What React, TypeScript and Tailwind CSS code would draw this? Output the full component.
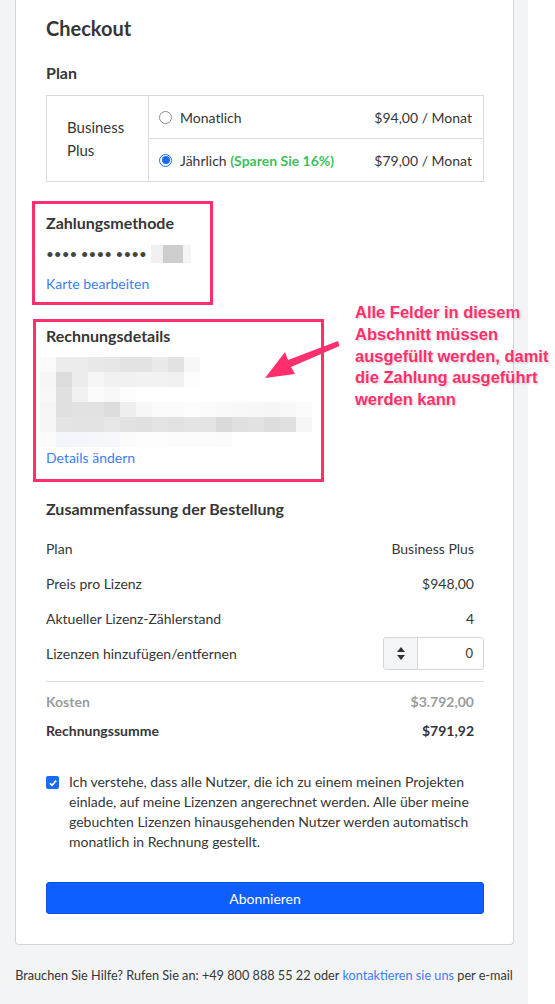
import React from "react";

const mosaic: string[][] = [
  ["#fafafa", "#ececec", "#ececec", "#e8e8e8", "#e6e6e6", "#e3e3e3", "#e3e3e3", "#e9e9e9", "#e2e2e2", "#f7f7f7"],
  ["#f6f6f6", "#dcdcdc", "#ececec", "#f6f6f6", "#f0f0f0", "#f0f0f0", "#f2f2f2", "#f2f2f2", "#f0f0f0", "#fdfdfd"],
  ["#f8f8f8", "#e0e0e0", "#f1f1f1", "#fafafa", "#f8f8f8", "#fdfdfd"],
  ["#f6f6f6", "#e0e0e0", "#e2e2e2", "#e2e2e2", "#dcdcdc", "#eeeeee", "#f7f7f7", "#fbfbfb", "#fafafa", "#fdfdfd", "#fbfbfb", "#f9f9f9", "#f8f8f8", "#f7f7f7", "#f6f6f6", "#f8f8f8", "#fbfbfb"],
  ["#f6f6f6", "#e4e4e4", "#e3e3e3", "#e3e3e3", "#e6e6e6", "#e2e2e2", "#e0e0e0", "#e4e4e4", "#e2e2e2", "#e4e4e4", "#e4e4e4", "#dadada", "#e0e0e0", "#e2e2e2", "#dddddd", "#e0e0e0", "#f6f6f6"],
  ["#fbfbfb", "#f2f5fb", "#f4f6fb", "#f6f7fb", "#f7f8fb", "#fbfbfb", "#fdfdfd", "#fdfdfd", "#fcfcfc", "#fcfcfc", "#fcfcfc", "#fbfbfb"],
];

function Radio({ checked }: { checked?: boolean }) {
  if (checked) {
    return (
      <span className="flex h-[13px] w-[13px] items-center justify-center rounded-full border border-[#1a6cf0] bg-white">
        <span className="h-[8px] w-[8px] rounded-full bg-[#1a6cf0]" />
      </span>
    );
  }
  return <span className="h-[13px] w-[13px] rounded-full border border-[#8a8a8a] bg-white" />;
}

function Row({ label, value }: { label: string; value: React.ReactNode }) {
  return (
    <div className="flex h-[35px] items-center justify-between pr-[10px]">
      <span>{label}</span>
      <span>{value}</span>
    </div>
  );
}

export default function App() {
  return (
    <div className="relative flex h-[1004px] w-[555px] overflow-hidden bg-white font-['Lato','Noto_Sans',sans-serif] text-[14px] text-[#363636]">
      <div className="flex w-[528px] flex-col bg-[#f3f4f6] px-[14px]">
        {/* Card */}
        <div className="ml-px w-[499px] rounded-b-[4px] border border-t-0 border-[#d3d5da] bg-white pb-[30px] pl-[30px] pr-[29px] pt-[14px]">
          <h1 className="text-[20px] font-bold leading-[28px] text-[#363636]">Checkout</h1>

          <h2 className="mt-[19px] text-[16px] font-bold leading-[24px]">Plan</h2>

          <div className="mt-[10px] flex w-[438px] border border-[#dadada]">
            <div className="flex w-[102px] items-center border-r border-[#dadada] pl-[20px] text-[15px] leading-[23px]">
              Business
              <br />
              Plus
            </div>
            <div className="flex flex-1 flex-col">
              <div className="flex h-[43px] items-center border-b border-[#dadada] pl-[10px] pr-[11px]">
                <Radio />
                <span className="ml-[8px] flex-1">Monatlich</span>
                <span>$94,00 / Monat</span>
              </div>
              <div className="flex h-[42px] items-center pl-[10px] pr-[11px]">
                <Radio checked />
                <span className="ml-[8px] flex-1">
                  Jährlich <span className="font-bold text-[#3cbf5c]">(Sparen Sie 16%)</span>
                </span>
                <span>$79,00 / Monat</span>
              </div>
            </div>
          </div>

          {/* Zahlungsmethode */}
          <div className="-ml-[14px] mt-[19px] w-[181px] border-[3px] border-[#fe2f6c] pb-[8px] pl-[11px] pt-[7px]">
            <h2 className="text-[16px] font-bold leading-[24px]">Zahlungsmethode</h2>
            <div className="mt-[9px] flex h-[20px] items-center">
              <span className="text-[13.5px] text-[#444]">•••• •••• ••••</span>
              <span className="ml-[4px] flex h-[18px]">
                <span className="w-[12px] bg-[#f0f0f0]" />
                <span className="w-[20px] bg-[#cdcdcd]" />
                <span className="w-[8px] bg-[#f4f4f4]" />
              </span>
            </div>
            <div className="mt-[10px] leading-[20px] text-[#3d7ef5]">Karte bearbeiten</div>
          </div>

          {/* Rechnungsdetails */}
          <div className="-ml-[13px] mt-[14px] w-[291px] border-[3px] border-[#fe2f6c] pb-[11px] pl-[10px] pt-[2px]">
            <h2 className="text-[16px] font-bold leading-[24px]">Rechnungsdetails</h2>
            <div className="-ml-[6px] mt-[9px] flex flex-col">
              {mosaic.map((row, i) => (
                <div key={i} className="flex h-[15px]">
                  {row.map((c, j) => (
                    <span key={j} className="w-[16px]" style={{ backgroundColor: c }} />
                  ))}
                </div>
              ))}
            </div>
            <div className="mt-[1px] leading-[20px] text-[#3d7ef5]">Details ändern</div>
          </div>

          <h2 className="mt-[15px] text-[16px] font-bold leading-[24px]">Zusammenfassung der Bestellung</h2>

          <div className="mt-[10px] flex w-[438px] flex-col">
            <Row label="Plan" value="Business Plus" />
            <Row label="Preis pro Lizenz" value="$948,00" />
            <Row label="Aktueller Lizenz-Zählerstand" value="4" />
            <div className="flex h-[35px] items-center justify-between">
              <span>Lizenzen hinzufügen/entfernen</span>
              <div className="flex h-[33px] w-[101px] rounded-[3px] border border-[#d6d6d6]">
                <div className="flex w-[34px] flex-col items-center justify-center gap-[3px] rounded-l-[3px] border-r border-[#d6d6d6] bg-[#f4f5f7]">
                  <span className="h-0 w-0 border-x-[4px] border-b-[5px] border-x-transparent border-b-[#333]" />
                  <span className="h-0 w-0 border-x-[4px] border-t-[5px] border-x-transparent border-t-[#333]" />
                </div>
                <div className="flex flex-1 items-center justify-end pr-[10px] text-[13px]">0</div>
              </div>
            </div>
            <div className="mt-[10px] border-t border-[#dcdcdc]" />
            <div className="mt-[7px] flex h-[24px] items-center justify-between pr-[10px] text-[#9c9c9c]">
              <span className="font-bold">Kosten</span>
              <span className="font-bold">$3.792,00</span>
            </div>
            <div className="mt-[5px] flex h-[24px] items-center justify-between pr-[10px] font-bold">
              <span>Rechnungssumme</span>
              <span>$791,92</span>
            </div>
          </div>

          <div className="mt-[30px] flex w-[438px] items-start">
            <span className="mt-[4px] flex h-[13px] w-[13px] shrink-0 items-center justify-center rounded-[2px] bg-[#1a6cf0]">
              <svg viewBox="0 0 12 12" className="h-[10px] w-[10px]">
                <path d="M2.2 6.3 L4.8 8.8 L9.8 3.2" fill="none" stroke="white" strokeWidth="2" />
              </svg>
            </span>
            <p className="ml-[10px] leading-[20px]">
              Ich verstehe, dass alle Nutzer, die ich zu einem meinen Projekten einlade, auf meine Lizenzen angerechnet werden. Alle über meine gebuchten Lizenzen hinausgehenden Nutzer werden automatisch monatlich in Rechnung gestellt.
            </p>
          </div>

          <button className="mt-[30px] h-[32px] w-[438px] rounded-[3px] border border-[#0b50d8] bg-[#0f5fff] text-[14px] text-white">
            Abonnieren
          </button>
        </div>

        <p className="mt-[20px] whitespace-nowrap text-center text-[12.7px] leading-[20px] text-[#363636]">
          Brauchen Sie Hilfe? Rufen Sie an: +49 800 888 55 22 oder{" "}
          <span className="text-[#3d7ef5]">kontaktieren sie uns</span> per e-mail
        </p>
      </div>

      {/* Annotation overlay */}
      <svg className="absolute left-[255px] top-[330px]" width="90" height="60" viewBox="0 0 90 60">
        <path d="M83 11 L84.5 16 L36 37 L40 44 L10 48 L30 22 L33 30 Z" fill="#fe2f6c" />
      </svg>
      <div className="absolute left-[355px] top-[302px] w-[200px] whitespace-nowrap font-['Liberation_Sans',sans-serif] text-[16.5px] font-bold leading-[21.8px] text-[#fe2f6c] [text-shadow:0_0_2px_white,1px_1px_2px_rgba(0,0,0,0.25)]">
        Alle Felder in diesem
        <br />
        Abschnitt müssen
        <br />
        ausgefüllt werden, damit
        <br />
        die Zahlung ausgeführt
        <br />
        werden kann
      </div>
    </div>
  );
}
